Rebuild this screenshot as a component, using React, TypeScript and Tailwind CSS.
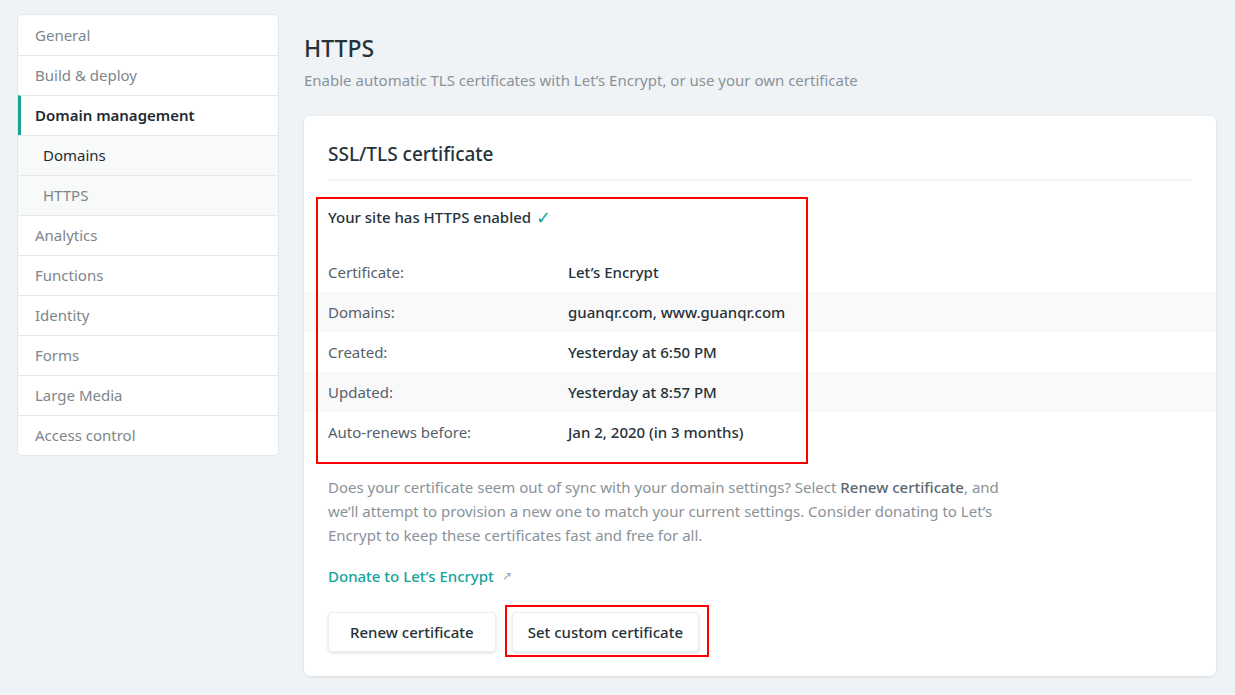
import React from "react";

const navItems = [
  { label: "General" },
  { label: "Build & deploy" },
  { label: "Domain management", active: true },
  { label: "Domains", sub: true, current: true },
  { label: "HTTPS", sub: true },
  { label: "Analytics" },
  { label: "Functions" },
  { label: "Identity" },
  { label: "Forms" },
  { label: "Large Media" },
  { label: "Access control" },
];

const certRows = [
  { label: "Certificate:", value: "Let’s Encrypt" },
  { label: "Domains:", value: "guanqr.com, www.guanqr.com" },
  { label: "Created:", value: "Yesterday at 6:50 PM" },
  { label: "Updated:", value: "Yesterday at 8:57 PM" },
  { label: "Auto-renews before:", value: "Jan 2, 2020 (in 3 months)" },
];

function Sidebar() {
  return (
    <nav className="w-[262px] shrink-0 self-start overflow-hidden rounded-[5px] border border-[#e4e7ea] bg-white">
      {navItems.map((item, i) => {
        let cls = "flex h-10 items-center text-[15px] " + (i > 0 ? "border-t border-[#e6e8ea] " : "");
        if (item.active) {
          cls += "border-l-[3px] border-l-[#15a39a] pl-[14px] font-semibold text-[#1f2b33]";
        } else if (item.sub) {
          cls += "bg-[#f8f9f9] pl-[25px] text-[14px] " + (item.current ? "text-[#1f2b33]" : "text-[#7d868c]");
        } else {
          cls += "pl-[17px] text-[#7d868c]";
        }
        return (
          <div key={item.label} className={cls}>
            {item.label}
          </div>
        );
      })}
    </nav>
  );
}

function CertificateCard() {
  return (
    <div className="relative rounded-[6px] bg-white pb-6 pt-6 shadow-[0_1px_3px_rgba(14,30,37,0.12)]">
      <div className="px-6">
        <h2 className="pb-[11px] text-[19px] font-medium text-[#26323a]">SSL/TLS certificate</h2>
        <div className="h-[2px] bg-[#f1f2f3]" />
        <p className="mt-[25px] flex h-[22px] items-center text-[15px] font-medium text-[#26323a]">
          Your site has HTTPS enabled
          <span className="ml-[5px] text-[18px] text-[#15a39a]">✓</span>
        </p>
      </div>

      <div className="mt-[24px]">
        {certRows.map((row, i) => (
          <div
            key={row.label}
            className={"flex h-10 items-center px-6 text-[15px] " + (i % 2 === 1 ? "bg-[#f9f9f9]" : "")}
          >
            <span className="w-[240px] text-[#55616a]">{row.label}</span>
            <span className="font-medium text-[#26323a]">{row.value}</span>
          </div>
        ))}
      </div>

      <div className="px-6">
        <p className="mt-[23px] max-w-[690px] text-[15px] leading-6 text-[#8a9299]">
          Does your certificate seem out of sync with your domain settings? Select{" "}
          <span className="font-medium text-[#5d6870]">Renew certificate</span>, and we’ll attempt to provision a new
          one to match your current settings. Consider donating to Let’s Encrypt to keep these certificates fast and
          free for all.
        </p>
        <a className="mt-[18px] inline-flex items-center gap-2 text-[15px] font-medium text-[#15a39a]">
          Donate to Let’s Encrypt
          <span className="text-[12px] text-[#9aa3a9]">↗</span>
        </a>
        <div className="mt-[24px] flex gap-4">
          <button className="h-10 rounded-[4px] border border-[#eceef0] bg-white px-[21px] text-[15px] font-medium text-[#26323a] shadow-[0_1px_3px_rgba(14,30,37,0.15)]">
            Renew certificate
          </button>
          <div className="relative">
            <button className="h-10 rounded-[4px] border border-[#eceef0] bg-white px-[15px] text-[15px] font-medium text-[#26323a] shadow-[0_1px_3px_rgba(14,30,37,0.15)]">
              Set custom certificate
            </button>
            <div className="pointer-events-none absolute -left-[7px] -top-[7px] -right-[10px] -bottom-[5px] border-2 border-[#ff0000]" />
          </div>
        </div>
      </div>

      {/* annotation box round the status block */}
      <div className="pointer-events-none absolute left-[12px] top-[81px] h-[267px] w-[492px] border-2 border-[#ff0000]" />
    </div>
  );
}

export default function App() {
  return (
    <div
      className="flex min-h-[695px] gap-[25px] bg-[#f0f3f6] pl-[17px] pt-[14px]"
      style={{ fontFamily: '"Noto Sans", "Open Sans", sans-serif' }}
    >
      <Sidebar />
      <main className="w-[912px] pt-[18px]">
        <h1 className="text-[23px] font-medium leading-8 text-[#26323a]">HTTPS</h1>
        <p className="mt-[5px] text-[15px] text-[#8a9299]">
          Enable automatic TLS certificates with Let’s Encrypt, or use your own certificate
        </p>
        <div className="mt-[24px]">
          <CertificateCard />
        </div>
      </main>
    </div>
  );
}
